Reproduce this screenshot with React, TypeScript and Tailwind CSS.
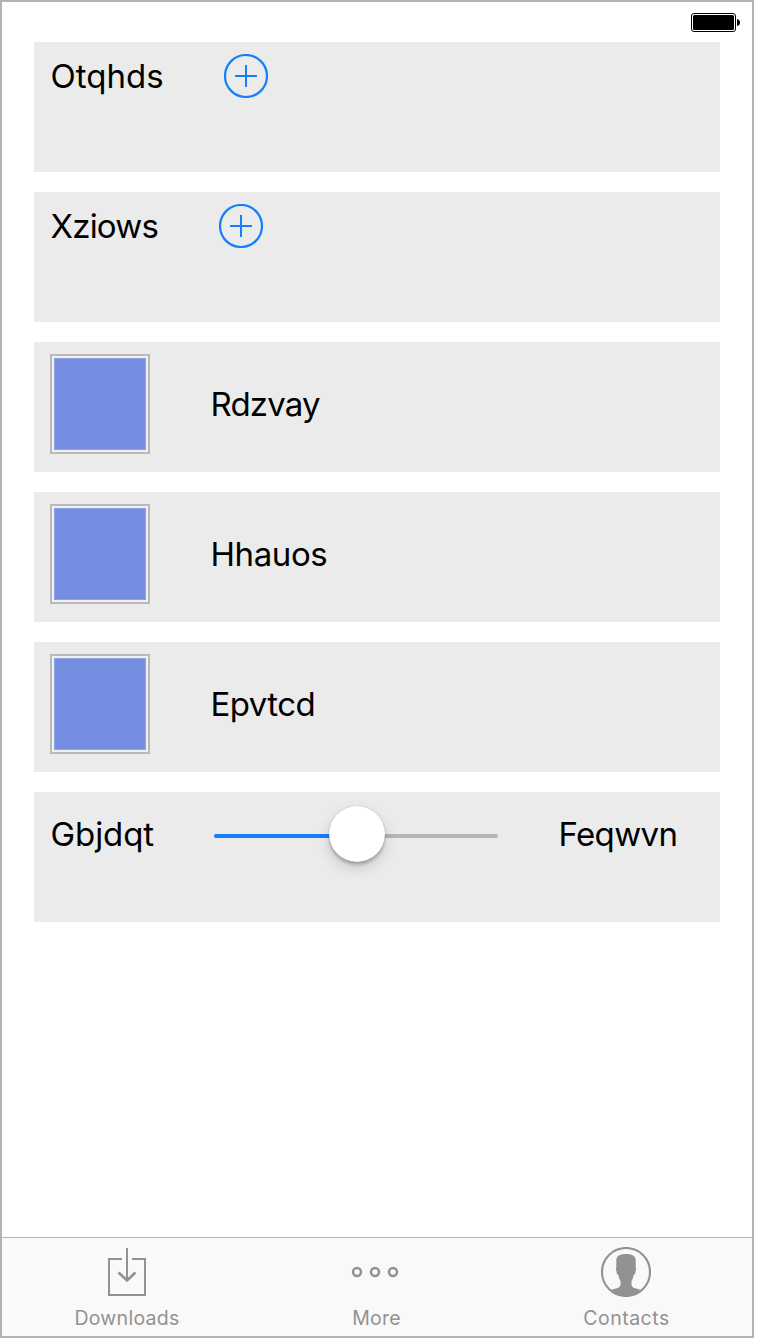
import React from 'react';

function Plus() {
  return (
    <svg className="block h-[44px] w-[44px] shrink-0" viewBox="0 0 44 44" fill="none" stroke="#147efb" strokeWidth="2">
      <circle cx="22" cy="22" r="21" strokeWidth="2.2" />
      <path d="M11 22H33M22 11V33" />
    </svg>
  );
}

function Label({ text, className }: { text: string; className: string }) {
  return <span className={'block whitespace-nowrap pl-[0.5px] text-[33px] leading-[44px] text-black ' + className}>{text}</span>;
}

function AddRow({ text, width }: { text: string; width: string }) {
  return (
    <section className="flex h-[130px] items-start bg-[#ebebeb] pt-[12px] pl-4">
      <Label text={text} className={width} />
      <Plus />
    </section>
  );
}

function SwatchRow({ text, tracking }: { text: string; tracking: string }) {
  return (
    <section className="flex h-[130px] items-start bg-[#ebebeb] pt-[12px] pl-4">
      <div className="h-[100px] w-[100px] border-2 border-[#b9b9b9] bg-[#f0f0f0] p-[2px]">
        <div className="h-full w-full border border-[#8da1e6] bg-[#758ee2]" />
      </div>
      <Label text={text} className={'mt-[28px] ml-[60px] ' + tracking} />
    </section>
  );
}

export default function App() {
  return (
    <div className="h-[1340px] w-[760px] bg-white font-['Inter',sans-serif]">
      <main className="flex h-[1338px] w-[754px] flex-col border-2 border-[#b2b2b2]">
        <header className="flex h-[40px] justify-end pt-[11px] pr-[12px]">
          <svg className="block h-[19px] w-[49px]" viewBox="0 0 49 19">
            <rect x="0.5" y="0.5" width="44" height="18" rx="2.5" fill="none" stroke="#000" />
            <rect x="2" y="2" width="41" height="15" rx="1.5" />
            <path d="M46 6Q49 6.500 49 9.500T46 13Z" />
          </svg>
        </header>
        <div className="flex flex-1 flex-col gap-5 px-8">
          <AddRow text="Otqhds" width="w-[174px]" />
          <AddRow text="Xziows" width="w-[169px] tracking-[-0.8px]" />
          <SwatchRow text="Rdzvay" tracking="tracking-[-0.8px]" />
          <SwatchRow text="Hhauos" tracking="tracking-[-0.4px]" />
          <SwatchRow text="Epvtcd" tracking="tracking-[-0.55px]" />
          <section className="flex h-[130px] items-start bg-[#ebebeb] pt-[20px] pl-4">
            <Label text="Gbjdqt" className="w-[164px] tracking-[-0.1px]" />
            <div className="relative mt-[22px] flex h-1 w-[284px] rounded-full bg-[#b6b6b6]">
              <div className="h-1 w-1/2 rounded-full bg-[#147efb]" />
              <div className="absolute top-[-28px] left-[115px] h-14 w-14 rounded-full bg-white shadow-[0_0_1px_rgba(0,0,0,0.3),0_3px_3px_rgba(0,0,0,0.2),0_6px_14px_rgba(0,0,0,0.16)]" />
            </div>
            <Label text="Feqwvn" className="ml-[60px] tracking-[-0.65px]" />
          </section>
        </div>
        <nav className="grid h-[99px] grid-cols-3 border-t border-[#b2b2b2] bg-[#f9f9f9] text-[19.5px] text-[#929292]">
          <div className="flex flex-col items-center">
            <svg className="mt-[9px] block h-[50px] w-[40px]" viewBox="0 0 40 50" fill="none" stroke="#929292" strokeWidth="2">
              <path d="M15 12H2V48H38V12H25M20 1V34" />
              <path d="M11.500 25.500L20 33.500L28.500 25.500" strokeWidth="2.7" />
            </svg>
            <span className="mt-[9px] leading-6 tracking-[0.28px]">Downloads</span>
          </div>
          <div className="flex flex-col items-center pr-[2px]">
            <svg className="mt-[9px] block h-[50px] w-[50px]" viewBox="0 0 50 50" fill="none" stroke="#929292" strokeWidth="2.5">
              <circle cx="6" cy="25" r="4" /><circle cx="24" cy="25" r="4" /><circle cx="42" cy="25" r="4" />
            </svg>
            <span className="mt-[9px] pl-px leading-6 tracking-[0.2px]">More</span>
          </div>
          <div className="flex flex-col items-center pr-[2px]">
            <svg className="mt-[9px] block h-[50px] w-[50px]" viewBox="0 0 50 50">
              <circle cx="25" cy="25" r="24" fill="none" stroke="#929292" strokeWidth="2.1" />
              <path fill="#929292" d="M25 7C20 7 15.300 8.500 15.300 13V20.500L14.800 22L16 27L17.300 28Q18 32 19.500 34V38Q18.500 41 15 41.500L9.500 43Q16 49 25 49T40.500 43L35 41.500Q31.500 41 30.500 38V34Q32 32 32.700 28L34 27L35.200 22L34.700 20.500V13C34.700 8.500 30 7 25 7Z" />
            </svg>
            <span className="mt-[9px] pl-px leading-6 tracking-[0.5px]">Contacts</span>
          </div>
        </nav>
      </main>
    </div>
  );
}
